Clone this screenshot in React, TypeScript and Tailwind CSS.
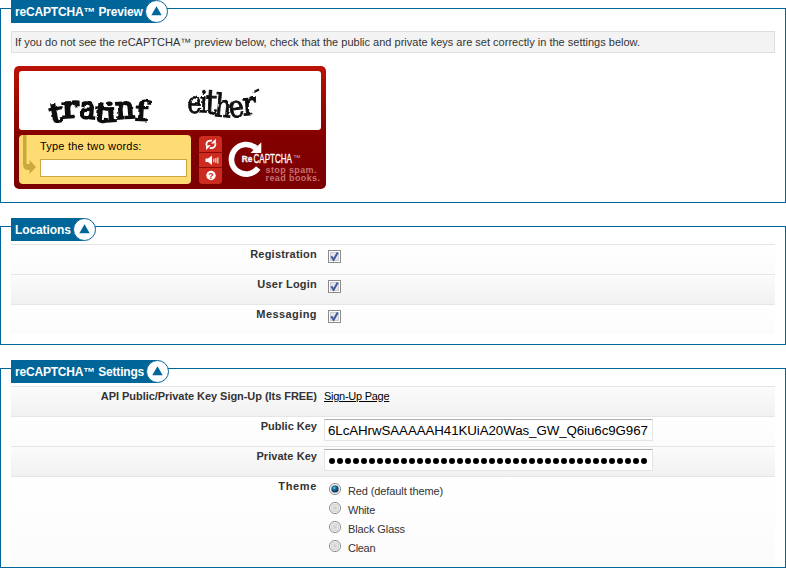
import React from "react";

type PanelProps = { title: string; titleStyle: string; className: string; children: React.ReactNode };

function Panel({ title, titleStyle, className, children }: PanelProps) {
  return (
    <section className={`border border-[#006699] px-[10px] ${className}`}>
      <div className="-mt-[9px] flex h-[23px] w-fit items-center">
        <h2 className="flex h-[23px] items-center bg-[#006699] pl-1 text-xs font-bold text-white">
          <span className={`block whitespace-nowrap ${titleStyle}`}>{title}</span>
        </h2>
        <svg className="-ml-px h-[23px] w-[24px] shrink-0" viewBox="0 0 24 23">
          <path d="M0 0H12V23H0Z" fill="#006699" />
          <circle cx="12.5" cy="11.5" r="11" fill="#fff" stroke="#006699" />
          <path d="M12.5 6.2 17.7 15.2H7.3Z" fill="#006699" />
        </svg>
      </div>
      {children}
    </section>
  );
}

function Row({ label, shaded, tall, tracking, children }: { label: string; shaded?: boolean; tall?: boolean; tracking: string; children: React.ReactNode }) {
  return (
    <div className={`flex border-t border-[#e5e5e5] bg-linear-to-b ${tall ? "h-[90px]" : "h-[30px]"} ${shaded ? "from-[#fbfbfb] to-[#f1f1f1]" : "from-white to-[#fbfbfb]"}`}>
      <div className={`w-[306px] shrink-0 pt-[2px] text-right text-[11px] leading-[15px] font-bold whitespace-nowrap ${tracking}`}>{label}</div>
      <div className="ml-[7px]">{children}</div>
    </div>
  );
}

function Check() {
  return (
    <svg className="mt-[5px] ml-1 h-[13px] w-[13px]" viewBox="0 0 13 13">
      <rect x=".5" y=".5" width="12" height="12" fill="#fff" stroke="#8b8b8b" />
      <rect x="2.5" y="2.5" width="8" height="8" fill="#e4e8ee" stroke="#c7ccd3" />
      <path d="M3.3 6.2 5.6 9.8 9.7 2.5" fill="none" stroke="#435a9c" strokeWidth="2" />
    </svg>
  );
}

function Option({ label, on, tracking }: { label: string; on?: boolean; tracking: string }) {
  return (
    <div className="flex h-[19px] items-start">
      <svg className="mt-[1px] ml-[5px] h-[13px] w-[13px]" viewBox="0 0 13 13">
        <defs>
          <radialGradient id="ring"><stop offset="0" stopColor="#c8c8c8" /><stop offset="1" stopColor="#f2f2f2" /></radialGradient>
          <radialGradient id="dot" cx=".4" cy=".35"><stop offset="0" stopColor="#8fe0f5" /><stop offset=".4" stopColor="#1d7ca8" /><stop offset="1" stopColor="#123a5a" /></radialGradient>
        </defs>
        <circle cx="6" cy="6" r="5.6" fill="#fafafa" stroke="#929292" />
        <circle cx="6" cy="6" r="4" fill="url(#ring)" stroke="#c2c2c2" strokeWidth=".7" />
        {on && <circle cx="6" cy="6" r="3.6" fill="url(#dot)" />}
      </svg>
      <span className={`mt-[2px] ml-[6px] text-[11px] leading-[14px] whitespace-nowrap ${tracking}`}>{label}</span>
    </div>
  );
}

// Each letter is placed, turned and stretched on its own
const letters = [
  { c: "t", x: 51, y: 123, r: -10, w: 1.1, h: 0.9 }, { c: "r", x: 62, y: 118, r: -3, w: 1.2, h: 1.0 },
  { c: "a", x: 79, y: 117.5, r: 5, w: 0.9, h: 1.0 }, { c: "t", x: 94, y: 121, r: 6, w: 1.1, h: 0.9 },
  { c: "i", x: 106, y: 122, r: -4, w: 1.1, h: 0.88 }, { c: "n", x: 116, y: 119, r: -4, w: 1.0, h: 1.02 },
  { c: "f", x: 135, y: 120, r: 3, w: 1.1, h: 0.88 },
];
const letters2 = [
  { c: "e", x: 187, y: 112.5, r: 3, w: 0.8, h: 1.02 }, { c: "i", x: 199, y: 112, r: 3, w: 0.85, h: 1 },
  { c: "t", x: 205, y: 113.5, r: 3, w: 0.95, h: 1.15 }, { c: "h", x: 214, y: 116, r: 5, w: 0.86, h: 1.05 },
  { c: "e", x: 230, y: 118, r: -7, w: 0.85, h: 1.02 }, { c: "r", x: 243, y: 115.5, r: -4, w: 0.95, h: 1.08 },
];

function Challenge() {
  return (
    <svg className="h-[59px] w-[302px] rounded-[3px] bg-white" viewBox="19 71 302 59">
      <defs>
        <filter id="rough" x="-10%" y="-20%" width="120%" height="140%">
          <feTurbulence type="fractalNoise" baseFrequency=".18" numOctaves="1" seed="4" />
          <feDisplacementMap in="SourceGraphic" scale="3" xChannelSelector="R" yChannelSelector="G" />
        </filter>
      </defs>
      <g filter="url(#rough)" fill="#0b0b0b" stroke="#0b0b0b" fontFamily="'DejaVu Serif', serif" fontSize="30">
        {letters.map((l, i) => (
          <text key={i} transform={`translate(${l.x} ${l.y}) rotate(${l.r}) scale(${l.w} ${l.h})`} strokeWidth="2">{l.c}</text>
        ))}
        {letters2.map((l, i) => (
          <text key={i} transform={`translate(${l.x} ${l.y}) rotate(${l.r}) scale(${l.w} ${l.h})`} strokeWidth=".9">{l.c}</text>
        ))}
        <path d="M254 92 259 89.5" strokeWidth="2" />
      </g>
    </svg>
  );
}

function Tools() {
  return (
    <svg className="ml-2 mt-px h-[48px] w-[23px] shrink-0" viewBox="0 0 23 48">
      <rect width="23" height="48" rx="3.5" fill="#cc2b20" />
      <path d="M0 16.5H23M0 31.5H23" stroke="#8d0903" />
      <path d="M7.4 9.3C7 6 9.2 4.2 13 4.6M16.4 7.4C16.8 10.7 14.6 12.4 10.8 12" fill="none" stroke="#fff" strokeWidth="1.8" />
      <path d="M16.8 2.8V7.6H12ZM7 14V9.2H11.8Z" fill="#fff" />
      <path d="M6.5 22.5H9L13 19.5V29L9 26H6.5Z" fill="#fff" />
      <path d="M14.9 22.6V26.2M16.9 22V26.8M18.9 21.3V27.5" stroke="#fff" strokeWidth="1" />
      <circle cx="12" cy="39.5" r="4.7" fill="#fff" />
      <text x="12" y="42.7" textAnchor="middle" fontSize="9" fontWeight="700" fill="#cc2b20">?</text>
    </svg>
  );
}

function Logo() {
  return (
    <svg className="ml-[6px] h-[49px] w-[94px] shrink-0" viewBox="228 135 94 49">
      <path d="M255.8 148A14.8 14.8 0 1 0 258.2 168" fill="none" stroke="#fff" strokeWidth="5.6" />
      <path d="M261.3 142.3V153H250.5Z" fill="#fff" />
      <text x="241.8" y="161.8" fontSize="8.5" fontWeight="700" fill="#fff" stroke="#fff" strokeWidth=".3" textLength="10.5" lengthAdjust="spacingAndGlyphs">Re</text>
      <text x="253.5" y="163.3" fontSize="12.8" fill="#fff" stroke="#fff" strokeWidth=".3" textLength="38.5" lengthAdjust="spacingAndGlyphs">CAPTCHA</text>
      <text x="293" y="160" fontSize="7" fill="#dfa5a5" textLength="7.5" lengthAdjust="spacingAndGlyphs">™</text>
      <g fill="#c47272" fontSize="9" fontWeight="700">
        <text x="265.5" y="173" textLength="51">stop spam.</text>
        <text x="265.5" y="181" textLength="54.5">read books.</text>
      </g>
    </svg>
  );
}

function Captcha() {
  return (
    <div className="mt-[13px] ml-[3px] h-[123px] w-[312px] rounded-[5px] bg-linear-to-b from-[#b91304] via-[#820000] via-60% to-[#7b0000] p-[5px]">
      <Challenge />
      <div className="mt-[5px] flex h-[49px]">
        <div className="flex h-[49px] w-[172px] shrink-0 rounded-[4px] bg-[#ffdc73]">
          <svg className="h-[49px] w-[21px] shrink-0" viewBox="0 0 21 49">
            <path d="M4 0H7.5V29H10.5V25L17 32 10.5 39V35H9Q4 35 4 29Z" fill="#c9a93d" />
          </svg>
          <div>
            <div className="mt-[4px] h-[15px] text-[11px] leading-[15px] tracking-[0.2px] whitespace-nowrap text-black">Type the two words:</div>
            <div className="mt-[5px] h-[18px] w-[147px] border border-[#cca940] bg-white" />
          </div>
        </div>
        <Tools />
        <Logo />
      </div>
    </div>
  );
}

export default function App() {
  return (
    <main className="h-[568px] w-[786px] overflow-hidden bg-white pt-2 font-['Liberation_Sans',Arial,sans-serif] text-[#333]">
      <Panel title="reCAPTCHA™ Preview" titleStyle="w-[130px] tracking-[-0.17px]" className="h-[195px]">
        <p className="mt-2 h-[22px] border border-[#dedede] bg-[#f3f3f3] pl-[3px] text-[11px] leading-[20px] tracking-[0.006px] whitespace-nowrap">
          If you do not see the reCAPTCHA™ preview below, check that the public and private keys are set correctly in the settings below.
        </p>
        <Captcha />
      </Panel>

      <Panel title="Locations" titleStyle="w-[58px] tracking-[-0.1px]" className="mt-[23px] h-[119px]">
        <div className="mt-[3px]">
          <Row label="Registration" tracking="tracking-[0.22px]"><Check /></Row>
          <Row label="User Login" shaded tracking="tracking-[0.22px]"><Check /></Row>
          <Row label="Messaging" tracking="tracking-[0.42px]"><Check /></Row>
        </div>
      </Panel>

      <Panel title="reCAPTCHA™ Settings" titleStyle="w-[131px] tracking-[-0.19px]" className="mt-[23px] h-[200px]">
        <div className="mt-[3px]">
          <Row label="API Public/Private Key Sign-Up (Its FREE)" shaded tracking="tracking-[-0.05px]">
            <a className="block pt-[2px] text-[11px] leading-[15px] tracking-[-0.27px] whitespace-nowrap text-black underline">Sign-Up Page</a>
          </Row>
          <Row label="Public Key" tracking="tracking-normal">
            <div className="mt-[2px] h-[22px] w-[329px] border border-[#e3e3e8] border-t-[#ababb3] bg-white pl-[3px] text-[13.333px] leading-[21px] tracking-[-0.085px] whitespace-nowrap text-black">6LcAHrwSAAAAAH41KUiA20Was_GW_Q6iu6c9G967</div>
          </Row>
          <Row label="Private Key" shaded tracking="tracking-[0.06px]">
            <div className="mt-[2px] flex h-[22px] w-[329px] items-center border border-[#e3e3e8] border-t-[#ababb3] bg-white pt-[2px] pl-[4px]">
              {Array.from({ length: 40 }, (_, i) => <span key={i} className="mr-[2px] h-[6px] w-[6px] shrink-0 rounded-full bg-black" />)}
            </div>
          </Row>
          <Row label="Theme" tall tracking="tracking-[0.65px]">
            <div className="pt-[5px]">
              <Option label="Red (default theme)" on tracking="tracking-[-0.11px]" />
              <Option label="White" tracking="tracking-[-0.2px]" />
              <Option label="Black Glass" tracking="tracking-[-0.1px]" />
              <Option label="Clean" tracking="tracking-[-0.3px]" />
            </div>
          </Row>
        </div>
      </Panel>
    </main>
  );
}
